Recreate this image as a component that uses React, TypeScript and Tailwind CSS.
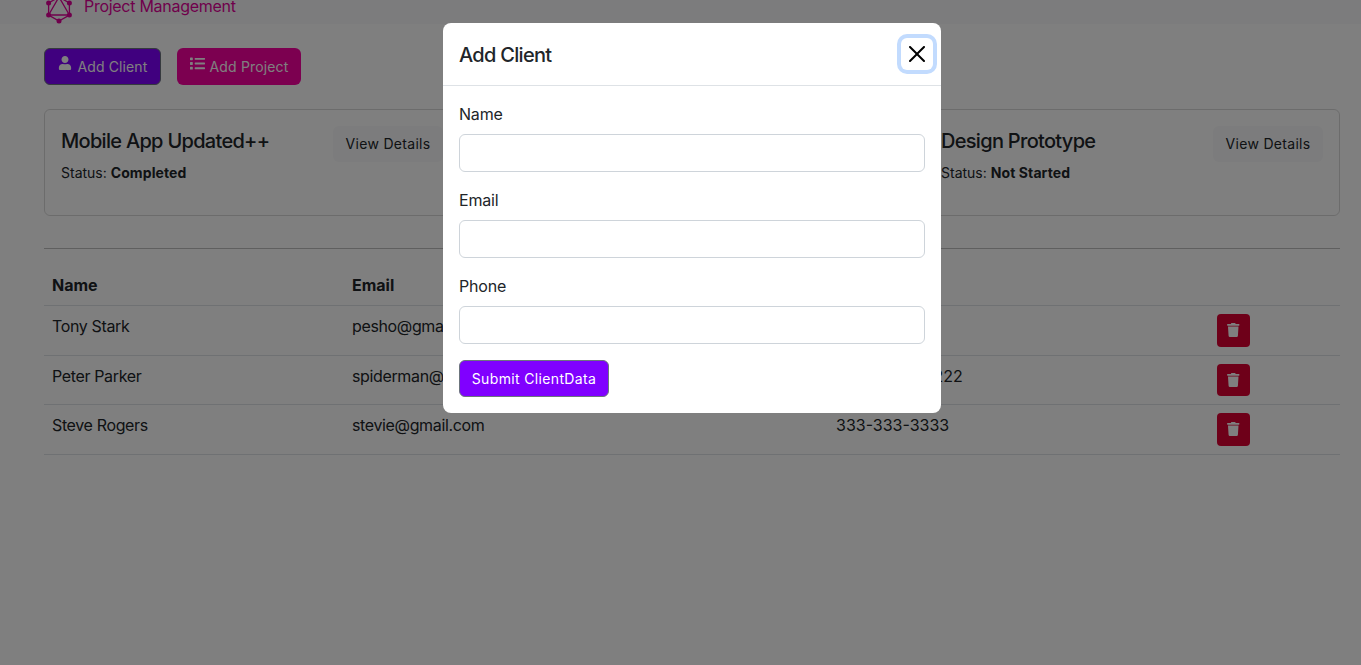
import { FaList, FaTrash, FaUser } from 'react-icons/fa';

const clients = [
  { name: 'Tony Stark', email: 'pesho@gmail.com', phone: '111-111-111' },
  { name: 'Peter Parker', email: 'spiderman@gmail.com', phone: '2222222222222' },
  { name: 'Steve Rogers', email: 'stevie@gmail.com', phone: '333-333-3333' },
];

function GraphqlLogo() {
  return (
    <svg viewBox="0 0 30 30" className="h-[30px] w-[30px] shrink-0" fill="none" stroke="#e10098" strokeWidth="1.3">
      <path d="M15 3 25.4 9v12L15 27 4.6 21V9z" />
      <path d="M15 3 25.4 21H4.6z" />
      <g fill="#e10098" stroke="none">
        <circle cx="15" cy="3" r="2.5" />
        <circle cx="25.4" cy="9" r="2.5" />
        <circle cx="25.4" cy="21" r="2.5" />
        <circle cx="15" cy="27" r="2.5" />
        <circle cx="4.6" cy="21" r="2.5" />
        <circle cx="4.6" cy="9" r="2.5" />
      </g>
    </svg>
  );
}

function ProjectCard({ title, status }: { title?: string; status?: string }) {
  return (
    <div className="h-[107px] rounded-md border border-black/15 p-4">
      {title && (
        <>
          <div className="flex h-9 items-center justify-between">
            <h5 className="mb-1.5 text-xl font-medium leading-6 tracking-[-0.7px] text-[#212529]">{title}</h5>
            <button className="h-9 w-[110px] rounded-md bg-[#f8f9fa] text-sm tracking-[0.3px] text-[#212529]">View Details</button>
          </div>
          <p className="text-sm leading-[21px] text-[#212529]">
            Status: <strong className="font-bold tracking-[0.1px]">{status}</strong>
          </p>
        </>
      )}
    </div>
  );
}

function Field({ label }: { label: string }) {
  return (
    <div className="mb-4">
      <label className="mb-2 block text-base leading-6 tracking-[-0.2px] text-[#212529]">{label}</label>
      <input className="block h-[38px] w-full rounded-md border border-[#ced4da] bg-white px-3" />
    </div>
  );
}

export default function App() {
  return (
    <div className="min-h-screen bg-white font-[Inter,sans-serif] text-[#212529]">
      <nav className="flex h-6 items-end overflow-hidden bg-[#f8f9fa] pl-11">
        <div className="flex items-end gap-2.5">
          <GraphqlLogo />
          <span className="mb-[6px] text-base leading-6 tracking-[-0.28px] text-[#e10098]">Project Management</span>
        </div>
      </nav>

      <main className="pl-11 pr-[21px] pt-6">
        <div className="flex gap-4">
          <button className="flex h-[37px] w-[117px] items-center justify-center gap-[6px] rounded-md border border-[#6c757d] bg-[#8000ff] text-sm tracking-[0.1px] text-white">
            <FaUser className="mb-[7px] h-[14px] w-[14px]" />
            Add Client
          </button>
          <button className="flex h-[37px] w-[124px] items-center justify-center gap-[5px] rounded-md bg-[#f900a0] text-sm tracking-[0.15px] text-white">
            <FaList className="mb-[7px] h-[15px] w-[15px]" />
            Add Project
          </button>
        </div>

        <div className="mt-6 grid grid-cols-3 gap-6">
          <ProjectCard title="Mobile App Updated++" status="Completed" />
          <ProjectCard />
          <ProjectCard title="Design Prototype" status="Not Started" />
        </div>

        <hr className="mb-4 mt-8 border-black/25" />

        <table className="w-full table-fixed border-collapse text-left text-base">
          <colgroup>
            <col className="w-[300px]" />
            <col className="w-[484px]" />
            <col className="w-[381px]" />
            <col />
          </colgroup>
          <thead>
            <tr className="border-b border-[#dee2e6]">
              <th className="h-[40.5px] px-2 font-bold">Name</th>
              <th className="h-[40.5px] px-2 font-bold">Email</th>
              <th className="h-[40.5px] px-2 font-bold">Phone</th>
              <th className="h-[40.5px] px-2" />
            </tr>
          </thead>
          <tbody>
            {clients.map((client) => (
              <tr key={client.name} className="border-b border-[#dee2e6]">
                <td className="p-2 align-top leading-6 tracking-[-0.36px]">{client.name}</td>
                <td className="p-2 align-top leading-6 tracking-[-0.36px]">{client.email}</td>
                <td className="p-2 align-top leading-6">{client.phone}</td>
                <td className="p-2">
                  <button className="flex h-[32.5px] w-[33px] items-center justify-center rounded bg-[#dc0032] text-white">
                    <FaTrash className="h-[14px] w-[12.5px]" />
                  </button>
                </td>
              </tr>
            ))}
          </tbody>
        </table>
      </main>

      <div className="fixed inset-0 bg-black/50" />

      <div className="absolute left-[443px] top-[23px] w-[498px] rounded-lg bg-white">
        <div className="flex h-[63px] items-center justify-between border-b border-[#dee2e6] pl-4 pr-2">
          <h5 className="pt-0.5 text-xl font-medium leading-6 tracking-[-0.7px] text-[#212529]">Add Client</h5>
          <button className="flex h-8 w-8 items-center justify-center rounded-md bg-white shadow-[0_0_0_4px_#c2dbfe]" aria-label="Close">
            <svg viewBox="0 0 16 16" className="h-4 w-4" fill="#000">
              <path d="M.293.293a1 1 0 0 1 1.414 0L8 6.586 14.293.293a1 1 0 1 1 1.414 1.414L9.414 8l6.293 6.293a1 1 0 0 1-1.414 1.414L8 9.414l-6.293 6.293a1 1 0 0 1-1.414-1.414L6.586 8 .293 1.707a1 1 0 0 1 0-1.414z" />
            </svg>
          </button>
        </div>
        <div className="p-4">
          <Field label="Name" />
          <Field label="Email" />
          <Field label="Phone" />
          <button className="block h-[37px] w-[150px] rounded-md border border-[#6c757d] bg-[#8000ff] text-sm tracking-[0.35px] text-white">
            Submit ClientData
          </button>
        </div>
      </div>
    </div>
  );
}
